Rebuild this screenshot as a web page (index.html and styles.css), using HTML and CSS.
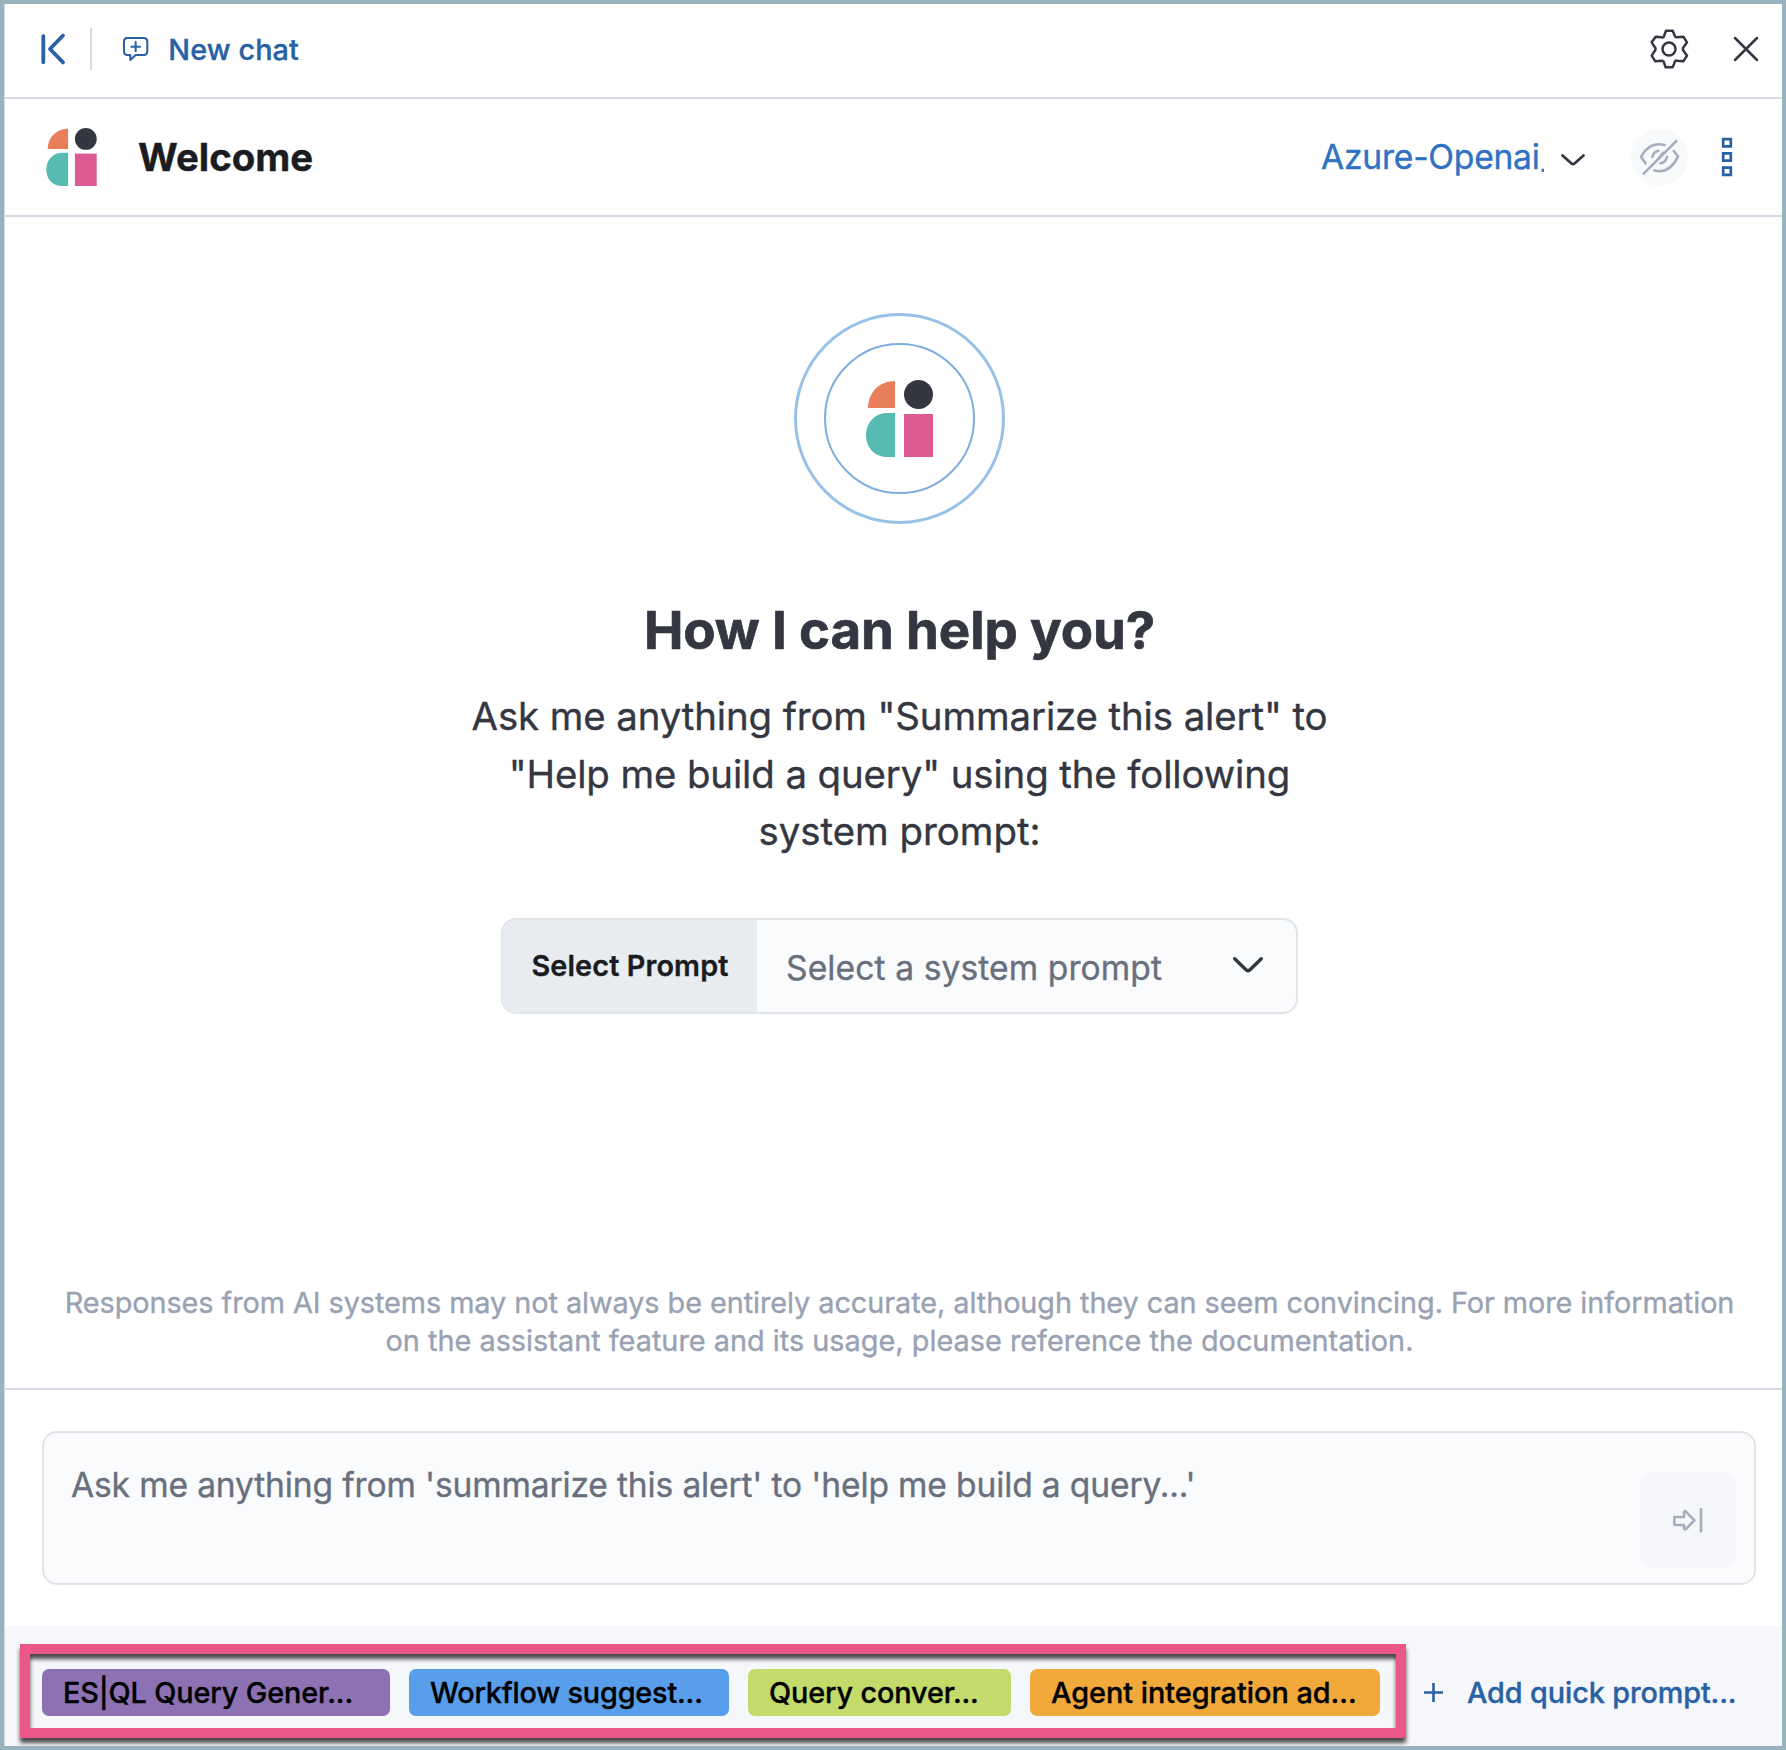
FILE: index.html
```html
<!DOCTYPE html>
<html lang="en">
<head>
<meta charset="utf-8">
<title>AI Assistant</title>
<link rel="stylesheet" href="styles.css">
</head>
<body>
<svg class="defs" aria-hidden="true">
  <symbol id="avatar" viewBox="0 0 67 77">
    <path fill="#e97e5a" d="M29 1v27H2C2 12 14 1 29 1Z"/>
    <circle fill="#343741" cx="52.5" cy="14.5" r="14.5"/>
    <path fill="#57bbb4" d="M29 33v44h-8C8 77 0 67 0 55s9-22 21-22Z"/>
    <path fill="#dd5a95" d="M38 34h29v43H38Z"/>
  </symbol>
</svg>
<div class="flyout">
  <header class="topbar">
    <svg class="icon-collapse" viewBox="0 0 24 32"><path d="M2.3 3.2v26M22 2.5 9 16l13 13.4"/></svg>
    <span class="divider"></span>
    <svg class="icon-chat" viewBox="0 0 76 72"><path d="M13 3h49q11 0 11 11v29q0 11-11 11H38L22 69V54h-9Q3 54 3 43V14Q3 3 13 3Z"/><path d="M38 15v28M25 29h26"/></svg>
    <a class="new-chat">New chat</a>
    <span class="spacer"></span>
    <svg class="icon-gear" viewBox="0 0 114 120"><path d="m48 5-7 19q-3 2-6 1l-18-2L5 40l11 17q1 3 0 6L5 80l11 17 20-2q3 0 5 3l6 17h21l7-18q2-3 6-2l19 2 11-17-12-17q-1-3 0-6l12-17-11-17-19 2q-4 0-6-3l-7-17Z"/><circle cx="57" cy="60" r="19.5"/></svg>
    <svg class="icon-close" viewBox="0 0 24 24"><path d="m1 1 22 22M23 1 1 23"/></svg>
  </header>
  <section class="titlebar">
    <svg class="title-avatar"><use href="#avatar"/></svg>
    <h2>Welcome</h2>
    <span class="spacer"></span>
    <span class="connector">Azure-Openai<span class="tail">_</span></span>
    <svg class="icon-down" viewBox="0 0 24 12"><path d="m1.5 1.5 9 8q1.500 1.300 3 0l9-8"/></svg>
    <span class="eye-button"><svg viewBox="0 0 116 104"><path d="M11 101 109 3M17 70Q7 58 3 50 28 3 74 15M101 33q9 11 13 17Q87 104 43 91M37 51q3-16 18-19M61 70q17-3 20-20M49 63 70 38"/></svg></span>
    <svg class="icon-boxes" viewBox="0 0 10 38"><path d="M1.200 1.200h7.600v7.200H1.200ZM1.200 15.400h7.600v7.200H1.200ZM1.200 29.600h7.600v7.200H1.200Z"/></svg>
  </section>
  <main class="welcome">
    <div class="halo"><div class="halo-inner"><svg><use href="#avatar"/></svg></div></div>
    <h1>How I can help you?</h1>
    <p class="intro"><span class="quoted">Ask me anything from "Summarize this alert" to<br>"Help me build a query" using the following</span><br>system prompt:</p>
    <div class="prompt-select">
      <label>Select Prompt</label>
      <div class="select-field"><span>Select a system prompt</span><svg viewBox="0 0 30 16"><path d="m1.700 1.700 11.300 11q2 2 4 0l11.300-11"/></svg></div>
    </div>
    <p class="disclaimer"><span class="line-one">Responses from AI systems may not always be entirely accurate, although they can seem convincing. For more information</span><br><span class="line-two">on the assistant feature and its usage, please reference the documentation.</span></p>
  </main>
  <section class="composer">
    <div class="input">
      <span class="placeholder">Ask me anything from 'summarize this alert' to 'help me build a query...'</span>
      <span class="send"><svg viewBox="0 0 90 74"><path d="M4 27h29V14q1-7 6-3l25 26-25 26q-5 4-6-3V51H8q-4 0-4-4V31q0-4 4-4M84 4v66"/></svg></span>
    </div>
  </section>
  <footer class="quick">
    <div class="badges">
      <span class="badge violet">ES|QL Query Gener...</span>
      <span class="badge blue">Workflow suggest...</span>
      <span class="badge lime">Query conver...</span>
      <span class="badge orange">Agent integration ad...</span>
    </div>
    <svg class="icon-plus" viewBox="0 0 19 19"><path d="M9.500 0v19M0 9.500h19"/></svg>
    <a class="add">Add quick prompt...</a>
    <div class="highlight"></div>
  </footer>
</div>
</body>
</html>
```
FILE: styles.css
```css
* { box-sizing: border-box; }
body {
  margin: 0;
  font-family: Inter, "Liberation Sans", sans-serif;
  font-size: 28.8px;
  color: #343741;
  white-space: nowrap;
  -webkit-text-stroke: .35px currentColor;
}
svg { fill: none; stroke-linecap: round; stroke-linejoin: round; flex: none; display: block; overflow: visible; }
.defs { position: absolute; width: 0; height: 0; }
h1, h2, p { margin: 0; }
.spacer { flex: 1; }

.flyout {
  width: 1786px;
  height: 1750px;
  border: 4px solid #9ab2be;
  box-shadow: inset 1px 0 #d3dae6;
  background: #fff;
  display: flex;
  flex-direction: column;
}

.topbar {
  height: 95px;
  border-bottom: 2px solid #d3dae6;
  display: flex;
  align-items: center;
  padding: 0 24px 3px 37px;
}
.icon-collapse { width: 24px; height: 32px; stroke: #2961a5; stroke-width: 3.8; }
.divider { width: 2px; height: 42px; background: #d3dae6; margin: 0 31px 0 25px; }
.icon-chat { width: 25.300px; height: 24px; stroke: #2961a5; stroke-width: 6.200; }
.new-chat { margin-left: 20px; color: #2961a5; font-weight: 500; letter-spacing: .1px; }
.icon-gear { width: 38px; height: 40px; stroke: #343741; stroke-width: 7.500; margin-right: 46px; }
.icon-close { width: 24px; height: 24px; stroke: #343741; stroke-width: 2.500; }

.titlebar {
  height: 118px;
  border-bottom: 2px solid #d3dae6;
  display: flex;
  align-items: center;
  padding: 0 50px 0 42px;
}
.title-avatar { width: 51px; height: 58px; }
.titlebar h2 { margin-left: 41px; font-size: 38.400px; font-weight: 700; color: #1a1c21; }
.connector { width: 223px; overflow: hidden; margin-bottom: 2px; font-size: 33.600px; letter-spacing: -.22px; color: #2f71c2; }
.tail { margin-left: 2px; }
.icon-down { width: 24px; height: 12px; stroke: #343741; stroke-width: 2.800; margin: 5px 46px 0 17px; }
.eye-button {
  width: 57px;
  height: 57px;
  border-radius: 50%;
  background: #f7f9fb;
  display: grid;
  place-items: center;
  margin-right: 34px;
}
.eye-button svg { width: 38.700px; height: 34.700px; stroke: #a5aebd; stroke-width: 7.500; }
.icon-boxes { width: 10px; height: 38px; stroke: #2961a5; stroke-width: 2.700; stroke-linejoin: miter; }

.welcome {
  height: 1173px;
  border-bottom: 2px solid #d3dae6;
  display: flex;
  flex-direction: column;
  align-items: center;
  padding: 96px 0 28px 13px;
}
.halo { width: 211px; height: 211px; border: 3px solid #98c1e8; border-radius: 50%; display: grid; place-items: center; }
.halo-inner { width: 151px; height: 151px; border: 2px solid #7eaee0; border-radius: 50%; display: grid; place-items: center; }
.halo-inner svg { width: 67px; height: 77px; }
h1 { margin-top: 74px; font-size: 52.800px; line-height: 64px; font-weight: 700; letter-spacing: -.12px; -webkit-text-stroke-width: .7px; }
.intro { margin-top: 26px; text-align: center; font-size: 38.400px; line-height: 57.600px; }
.quoted { letter-spacing: -.11px; }
.prompt-select {
  margin-top: 57px;
  width: 797px;
  height: 96px;
  border: 2px solid #e1e4e9;
  border-radius: 15px;
  display: flex;
  overflow: hidden;
  background: #fafbfd;
}
.prompt-select label { width: 254px; background: #e9edf2; color: #1a1c21; font-weight: 600; letter-spacing: .12px; display: grid; place-items: center; }
.select-field { flex: 1; display: flex; align-items: center; justify-content: space-between; padding: 4px 33px 0 29px; font-size: 33.600px; letter-spacing: .1px; color: #69707d; }
.select-field svg { width: 30px; height: 16px; stroke: #343741; stroke-width: 3.400; margin-bottom: 5px; }
.disclaimer { margin-top: auto; text-align: center; line-height: 38px; color: #98a2b3; }
.line-one { letter-spacing: -.043px; }
.line-two { letter-spacing: .03px; }

.composer { height: 236px; padding: 41px 26px 0 38px; }
.input {
  height: 154px;
  border: 2px solid #e2e4e8;
  border-radius: 15px;
  background: #fafbfd;
  display: flex;
  justify-content: space-between;
  align-items: flex-end;
  padding: 0 18px 15px 27px;
}
.placeholder { align-self: flex-start; margin-top: 30px; line-height: 44px; font-size: 33.600px; letter-spacing: -.15px; color: #69707d; }
.send { width: 96px; height: 96px; border-radius: 15px; background: #f4f6fa; display: grid; place-items: center; }
.send svg { width: 30px; height: 24.700px; stroke: #a5aebd; stroke-width: 8; }

.quick { position: relative; flex: 1; background: #f5f7fb; box-shadow: inset 1px 0 #d3dae6; display: flex; align-items: center; padding: 12px 0 0 38px; }
.badges { display: flex; gap: 19px; }
.badge { height: 47px; line-height: 47px; padding-left: 21px; border-radius: 7px; color: #000; font-weight: 500; letter-spacing: -.12px; }
.violet { width: 348px; background: #8d72b3; }
.blue { width: 320px; background: #589eea; letter-spacing: -.18px; }
.lime { width: 263px; background: #c2db6b; }
.orange { width: 350px; background: #f2a93b; letter-spacing: 0; }
.icon-plus { width: 19px; height: 19px; stroke: #2961a5; stroke-width: 2.600; stroke-linecap: butt; margin-left: 44px; }
.add { margin-left: 24px; color: #2961a5; font-weight: 500; letter-spacing: -.1px; }
/* Callout frame drawn over the quick prompt badges */
.highlight {
  position: absolute;
  left: 16px;
  top: 18px;
  width: 1386px;
  height: 94px;
  border: 10px solid #eb5888;
  filter: drop-shadow(0 5px 2px rgba(0, 0, 0, .7));
  clip-path: inset(-4px -4px -8px -4px);
}
```
